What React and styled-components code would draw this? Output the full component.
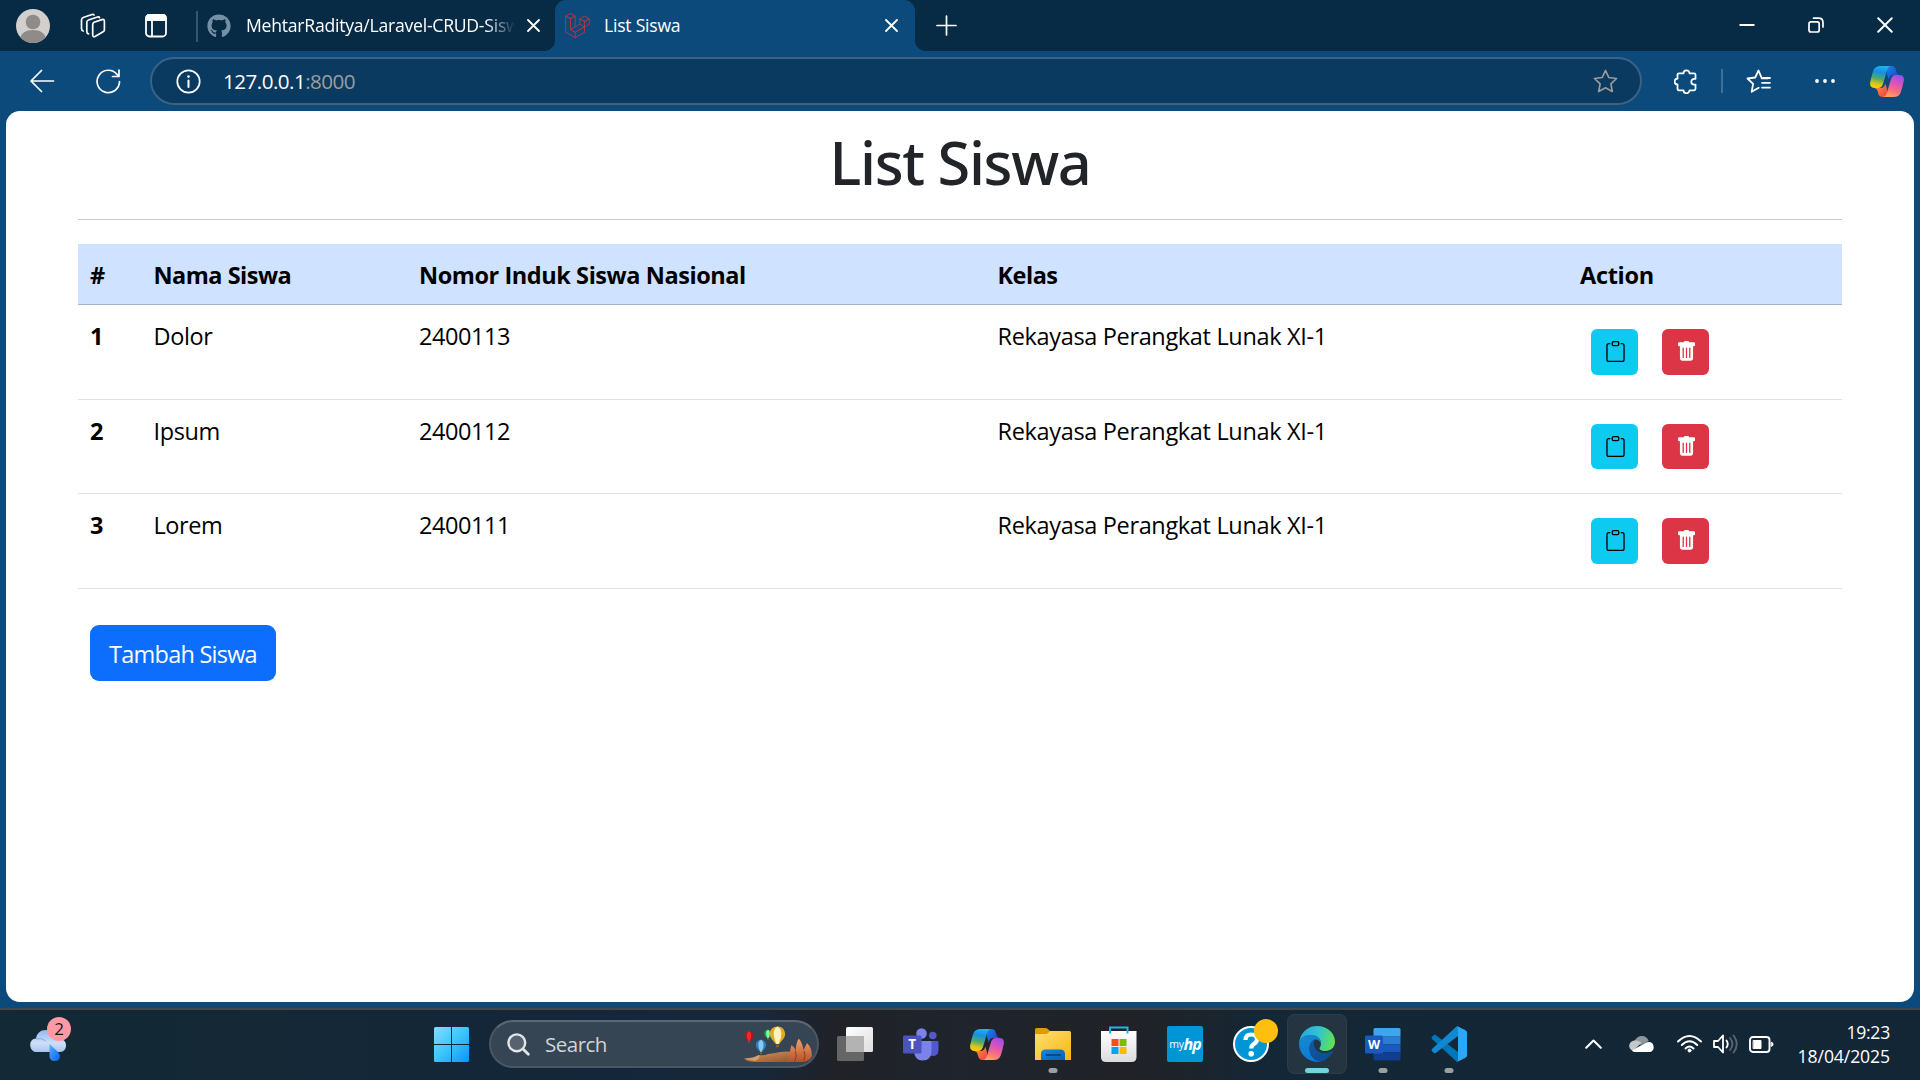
import React from "react";
import styled, { createGlobalStyle } from "styled-components";
import { BsClipboard, BsTrashFill } from "react-icons/bs";
import { SiLaravel } from "react-icons/si";
import { FaGithub } from "react-icons/fa";

const GlobalStyle = createGlobalStyle`
  *, *::before, *::after { box-sizing: border-box; }
  html, body { margin: 0; padding: 0; }
  body {
    width: 1920px;
    height: 1080px;
    overflow: hidden;
    font-family: "Open Sans", "Noto Sans", sans-serif;
    background: #0b4a7a;
  }
  svg { display: block; flex: none; }
`;

const Screen = styled.div`
  width: 1920px;
  height: 1080px;
  display: flex;
  flex-direction: column;
  background: #0b4a7a;
`;

/* ---------- Tab strip ---------- */

const TabStrip = styled.header`
  height: 51px;
  display: flex;
  align-items: stretch;
  background: #072a45;
  color: #fff;
  padding-left: 16px;
`;

const StripTools = styled.div`
  display: flex;
  align-items: center;
  width: 180px;
`;

const Avatar = styled.div`
  width: 34px;
  height: 34px;
  border-radius: 50%;
  overflow: hidden;
  margin-right: 30px;
`;

const ToolGap = styled.span`
  width: ${(p) => p.$w}px;
  flex: none;
`;

const StripDivider = styled.span`
  width: 2px;
  height: 31px;
  margin-top: 1px;
  align-self: center;
  background: #3a5469;
`;

const Tab = styled.div`
  position: relative;
  display: flex;
  align-items: center;
  width: ${(p) => p.$width}px;
  padding-left: 9px;
  border-radius: 11px 11px 0 0;
  background: ${(p) => (p.$active ? "#0b4a7a" : "transparent")};
  font-size: 17.6px;
  line-height: 26px;

  ${(p) =>
    p.$active &&
    `
    &::before, &::after {
      content: "";
      position: absolute;
      bottom: 0;
      width: 10px;
      height: 10px;
    }
    &::before {
      left: -10px;
      background: radial-gradient(circle at 0 0, transparent 9.5px, #0b4a7a 10px);
    }
    &::after {
      right: -10px;
      background: radial-gradient(circle at 100% 0, transparent 9.5px, #0b4a7a 10px);
    }
  `}
`;

const TabTitle = styled.span`
  flex: none;
  width: 269px;
  margin-left: ${(p) => p.$gap}px;
  padding-bottom: 1px;
  white-space: nowrap;
  letter-spacing: -0.24px;
  ${(p) => p.$fade && "mask-image: linear-gradient(90deg, #000 240px, transparent 269px);"}
`;

const NewTab = styled.div`
  display: flex;
  align-items: center;
  padding: 0 0 1px 21px;
`;

const WindowControls = styled.div`
  display: flex;
  align-items: center;
  gap: 53px;
  margin-left: auto;
  padding: 0 27px 1px 0;
`;

/* ---------- Address bar ---------- */

const Toolbar = styled.div`
  height: 60px;
  display: flex;
  align-items: center;
  padding-left: 29px;
  background: #0b4a7a;
`;

const NavButtons = styled.div`
  display: flex;
  gap: 41px;
  width: 121px;
`;

const AddressField = styled.div`
  width: 1492px;
  height: 48px;
  display: flex;
  align-items: center;
  padding: 0 22px 0 24px;
  border: 2px solid #3a6285;
  border-radius: 24px;
  background: #0a3a60;
`;

const Url = styled.span`
  flex: 1;
  margin-left: 22px;
  font-size: 20.6px;
  line-height: 30px;
  letter-spacing: -0.52px;
  color: #fff;
`;

const Port = styled.span`
  color: #9d9d9d;
`;

const ToolbarActions = styled.div`
  display: flex;
  align-items: center;
  margin-left: 32px;
`;

const ActionDivider = styled.span`
  width: 2px;
  height: 24px;
  margin: 0 23px 0 23px;
  background: #3f6f96;
`;

/* ---------- Page ---------- */

const Viewport = styled.div`
  height: 897px;
  padding: 0 6px 6px;
  background: #0b4a7a;
`;

const Page = styled.main`
  height: 891px;
  border-radius: 14px;
  background: #fff;
  padding: 0 72px;
`;

const Title = styled.h1`
  margin: 0;
  padding-top: 15px;
  height: 108px;
  text-align: center;
  font-family: "Noto Sans", sans-serif;
  font-weight: 500;
  font-size: 59.5px;
  line-height: 72px;
  letter-spacing: -1.4px;
  color: #212529;
`;

const Rule = styled.hr`
  margin: 0 0 24px;
  border: 0;
  height: 1px;
  background: #c8c9ca;
`;

const Table = styled.div`
  display: flex;
  flex-direction: column;
  font-size: 23.5px;
  line-height: 36px;
  color: #000;
`;

const TableRow = styled.div`
  display: grid;
  grid-template-columns: 63.5px 265.5px 578.5px 582.5px 1fr;
  height: ${(p) => (p.$head ? 61 : 94.5)}px;
  background: ${(p) => (p.$head ? "#cfe2ff" : "#fff")};
  border-bottom: 1px solid ${(p) => (p.$head ? "#a6b5cc" : "#dee2e6")};
  font-weight: ${(p) => (p.$head ? 700 : 400)};
`;

const Cell = styled.div`
  padding: 13px 0 0 12px;
  white-space: nowrap;
  letter-spacing: ${(p) => p.$spacing ?? 0}px;
  font-weight: ${(p) => (p.$bold ? 700 : "inherit")};
`;

const Actions = styled.div`
  display: flex;
  gap: 24px;
  padding: 24px 0 0 23px;
`;

const IconButton = styled.button`
  display: flex;
  align-items: center;
  justify-content: center;
  width: 47px;
  height: 45.5px;
  padding: 0 0 0 1px;
  border: 0;
  border-radius: 6px;
  font-size: 21px;
  color: ${(p) => (p.$danger ? "#fff" : "#000")};
  background: ${(p) => (p.$danger ? "#dc3545" : "#0dcaf0")};
`;

const AddButton = styled.button`
  display: block;
  margin: 36px 0 0 12px;
  width: 186px;
  height: 56px;
  padding: 3px 0 0;
  border: 0;
  border-radius: 9px;
  background: #0d6efd;
  color: #fff;
  font-family: inherit;
  font-size: 23.5px;
  line-height: 36px;
  letter-spacing: -0.76px;
`;

/* ---------- Taskbar ---------- */

const Taskbar = styled.footer`
  height: 72px;
  display: flex;
  align-items: center;
  padding-bottom: 2px;
  border-top: 2px solid #41484d;
  background: linear-gradient(
    90deg,
    #132935 0,
    #142836 260px,
    #14273a 600px,
    #17273a 760px,
    #202227 835px,
    #1f242d 960px,
    #202227 1130px,
    #1d242b 1190px,
    #142736 1260px,
    #132636 1920px
  );
`;

const Weather = styled.div`
  position: relative;
  width: 404px;
  padding: 2px 0 0 30px;
`;

const Badge = styled.span`
  position: absolute;
  left: 47px;
  top: -10px;
  width: 24px;
  height: 24px;
  border-radius: 50%;
  background: #ff99a4;
  color: #1b1b1b;
  font-size: 17px;
  line-height: 23px;
  text-align: center;
`;

const StartButton = styled.div`
  width: 85px;
  padding-left: 30px;
`;

const SearchBox = styled.div`
  display: flex;
  align-items: center;
  width: 330px;
  height: 48px;
  padding: 0 3px 0 16px;
  border: 2px solid #4a5763;
  border-top-color: #5d6873;
  border-radius: 24px;
  background: #364553;
`;

const SearchLabel = styled.span`
  flex: 1;
  padding-left: 15px;
  font-size: 20.5px;
  line-height: 30px;
  letter-spacing: -0.5px;
  color: #cfd4d8;
`;

const Apps = styled.div`
  display: flex;
  margin-left: 3px;
`;

const AppSlot = styled.div`
  position: relative;
  display: flex;
  align-items: center;
  justify-content: center;
  width: 60px;
  height: 60px;
  margin: 0 3px;
  border-radius: 8px;
  ${(p) => p.$active && "background: #243441; box-shadow: inset 0 0 0 1px #2d3c48;"}
`;

const RunningMark = styled.span`
  position: absolute;
  bottom: 1px;
  left: 50%;
  transform: translateX(-50%);
  width: ${(p) => (p.$active ? 24 : 9)}px;
  height: 5px;
  border-radius: 3px;
  background: ${(p) => (p.$active ? "#76d3da" : "#9a9fa3")};
`;

const HpTile = styled.div`
  display: flex;
  align-items: center;
  justify-content: center;
  width: 36px;
  height: 36px;
  border-radius: 2px;
  background: #0096d6;
  color: #fff;
  font-size: 10.5px;
  line-height: 36px;
  letter-spacing: -0.4px;
`;

const HpMark = styled.b`
  font-size: 16px;
  font-style: italic;
  letter-spacing: -1px;
`;

const NotifyDot = styled.span`
  position: absolute;
  right: 3px;
  top: 5px;
  width: 24px;
  height: 24px;
  border-radius: 50%;
  background: #ffbf0f;
`;

const Tray = styled.div`
  display: flex;
  align-items: center;
  margin-left: auto;
  padding-right: 30px;
`;

const Clock = styled.div`
  width: 116px;
  display: flex;
  flex-direction: column;
  align-items: flex-end;
  color: #fff;
  font-size: 17.6px;
  line-height: 24px;
`;

const ClockLine = styled.span`
  letter-spacing: ${(p) => p.$spacing}px;
`;

/* ---------- Drawings ---------- */

const stroke = { fill: "none", stroke: "#fff", strokeWidth: 1.7, strokeLinecap: "round", strokeLinejoin: "round" };

const AvatarIcon = () => (
  <svg width="34" height="34" viewBox="0 0 34 34">
    <rect width="34" height="34" fill="#d2d0ce" />
    <circle cx="17" cy="13" r="7.3" fill="#8f8b88" />
    <path d="M4 30c1-6 6-9 13-9s12 3 13 9l-4 4H8z" fill="#8f8b88" />
  </svg>
);

const WorkspacesIcon = () => (
  <svg width="26" height="26" viewBox="0 0 26 26" {...stroke}>
    <path d="M14 9.300 22 6.600q2.400-.6 2.400 1.400v8.800q0 1.400-1.300 1.900L15 23.600q-2.300.7-2.300-1.500v-10q0-2.200 1.300-2.800z" />
    <path d="M8.600 20.800Q6.800 20.500 6.800 18.500V9.500Q6.800 7.500 8.500 7L17.500 4q1.600-.4 2 .6" />
    <path d="M3.200 18Q1.500 17.500 1.500 15.500V7Q1.500 5 3.200 4.500L12 1.500q1.600-.4 2 .5" />
  </svg>
);

const TabActionsIcon = () => (
  <svg width="22" height="24" viewBox="0 0 22 24" {...stroke} strokeWidth="1.8">
    <rect x="1" y="1" width="20" height="21.500" rx="3.500" />
    <path d="M1 4.500Q1 1 4.500 1h13Q21 1 21 4.500V6H1z" fill="#fff" />
    <path d="M7 7v15" />
  </svg>
);

const CrossIcon = ({ size = 13, width = 1.8 }) => (
  <svg width={size} height={size} viewBox="0 0 13 13" {...stroke} strokeWidth={width}>
    <path d="M1 1l11 11M12 1 1 12" />
  </svg>
);

const PlusIcon = () => (
  <svg width="21" height="21" viewBox="0 0 21 21" {...stroke}>
    <path d="M10.500 1v19M1 10.500h19" />
  </svg>
);

const MinimizeIcon = () => (
  <svg width="16" height="16" viewBox="0 0 16 16">
    <path d="M0.500 8h15" stroke="#fff" strokeWidth="2" />
  </svg>
);

const RestoreIcon = () => (
  <svg width="16" height="16" viewBox="0 0 16 16" {...stroke} strokeWidth="1.7">
    <rect x="1" y="4.800" width="10.200" height="10.200" rx="2" />
    <path d="M5.500 1.200h5Q15 1.200 15 5.500v4.500" />
  </svg>
);

const BackIcon = () => (
  <svg width="26" height="24" viewBox="0 0 26 24" {...stroke}>
    <path d="M12.500 1.500 2 12l10.500 10.500M2 12h22.500" />
  </svg>
);

const ReloadIcon = () => (
  <svg width="25" height="25" viewBox="0 0 25 25" {...stroke}>
    <path d="M23.500 12.500A11.200 11.200 0 1 1 21 5.400L23 7.500M23 1v6.500h-6.500" />
  </svg>
);

const InfoIcon = () => (
  <svg width="25" height="25" viewBox="0 0 25 25" {...stroke}>
    <circle cx="12.500" cy="12.500" r="11.200" />
    <path d="M12.500 11.500v6.500" strokeWidth="2" />
    <circle cx="12.500" cy="7.600" r=".7" fill="#fff" strokeWidth="1.200" />
  </svg>
);

const StarIcon = () => (
  <svg width="25" height="25" viewBox="0 0 25 25" {...stroke} stroke="#9b9b9b">
    <path d="M12.500 1.500l3.300 7 7.700 1-5.600 5.300 1.400 7.700-6.800-3.700-6.800 3.700 1.400-7.700L1.500 9.500l7.700-1z" />
  </svg>
);

const PuzzleIcon = () => (
  <svg width="24" height="25" viewBox="0 0 24 25" {...stroke} strokeWidth="1.800">
    <path d="M5 4.300h4.500a3 3 0 0 1 6 0H20q1.500 0 1.500 1.500v4h-1.300a2.900 2.900 0 0 0 0 5.800h1.300v4.200q0 1.500-1.500 1.500h-4.500a3 3 0 0 1-6 0H5q-1.500 0-1.500-1.500v-4.300a2.900 2.900 0 0 1 0-5.800V5.800Q3.500 4.300 5 4.300z" />
  </svg>
);

const FavoritesIcon = () => (
  <svg width="25" height="25" viewBox="0 0 25 25" {...stroke} strokeWidth="1.800">
    <path d="M22 9.300h-6.200L12.500 1.500 9.200 8.500 1.500 9.500l5.600 5.300-1.400 8 7-4" />
    <path d="M17 9h7M16 13.800h8M16 18.600h8" />
  </svg>
);

const DotsIcon = () => (
  <svg width="20" height="6" viewBox="0 0 20 6" fill="#fff">
    <circle cx="2" cy="3" r="1.900" />
    <circle cx="10" cy="3" r="1.900" />
    <circle cx="18" cy="3" r="1.900" />
  </svg>
);

const CopilotIcon = ({ id }) => (
  <svg width="34" height="31" viewBox="0 0 34 31">
    <defs>
      <linearGradient id={`${id}-left`} x1=".6" y1="0" x2=".4" y2="1">
        <stop offset="0" stopColor="#21b4ef" />
        <stop offset=".3" stopColor="#168ee0" />
        <stop offset=".6" stopColor="#55ab66" />
        <stop offset=".85" stopColor="#dcc817" />
        <stop offset="1" stopColor="#ffc800" />
      </linearGradient>
      <linearGradient id={`${id}-right`} x1=".7" y1="0" x2=".35" y2="1">
        <stop offset="0" stopColor="#a04bea" />
        <stop offset=".4" stopColor="#dc55b5" />
        <stop offset=".7" stopColor="#f8707c" />
        <stop offset="1" stopColor="#ffa45c" />
      </linearGradient>
      <linearGradient id={`${id}-top`} x1="0" y1="0" x2="1" y2="1">
        <stop offset="0" stopColor="#1a82e8" />
        <stop offset="1" stopColor="#1740c4" />
      </linearGradient>
      <linearGradient id={`${id}-base`} x1="0" y1="0" x2="1" y2="1">
        <stop offset="0" stopColor="#ffa026" />
        <stop offset="1" stopColor="#ee3c4e" />
      </linearGradient>
    </defs>
    <path d="M17 0h4.500q3.200 0 4.100 3l.9 3.200q.7 2.300 3 2.800h-6.500q-3 .2-4 3.500L18.700 13.500 17 8z" fill={`url(#${id}-top)`} />
    <path d="M17 31h-4.500q-3.200 0-4.100-3l-.9-3.200Q6.800 22.500 4.500 22H11q3-.2 4-3.500l.3-1L17 23z" fill={`url(#${id}-base)`} />
    <path d="M10.500 0H21q-2.800.4-3.700 3.600L13.300 17q-1.300 5-5 5H4.800Q-1 22 .3 15.800q1-5.300 3-11.300Q5 0 10.500 0z" fill={`url(#${id}-left)`} />
    <path d="M23.500 31H13q2.800-.4 3.700-3.600L20.700 14q1.300-5 5-5h3.500q5.800 0 4.500 6.200-1 5.300-3 11.300Q29 31 23.500 31z" fill={`url(#${id}-right)`} />
  </svg>
);

const WeatherIcon = () => (
  <svg width="37" height="33" viewBox="0 0 37 33">
    <defs>
      <linearGradient id="cloud" x1="0" y1="0" x2="0" y2="1">
        <stop offset="0" stopColor="#92b6f3" />
        <stop offset=".6" stopColor="#cfdff8" />
        <stop offset="1" stopColor="#a9c3f0" />
      </linearGradient>
      <linearGradient id="drop" x1="0" y1="0" x2="1" y2="1">
        <stop offset="0" stopColor="#5ab0ff" />
        <stop offset="1" stopColor="#0463ee" />
      </linearGradient>
    </defs>
    <path d="M6 9.500C7 4 10.500 1 15.500 1c6 0 9.500 4 10 9h4.500c8 0 8 13 0 13H6.500C-1.500 23-2 9.500 6 9.500z" fill="url(#cloud)" />
    <path d="M6 9.800q5.500-1.300 9.500 2" fill="none" stroke="#86a9e8" />
    <path d="M19.500 15l8 7.500q2.800 3 2.300 6-.5 3.500-5.200 3.500-5.100 0-5.100-5z" fill="url(#drop)" />
  </svg>
);

const WindowsIcon = () => (
  <svg width="35" height="35" viewBox="0 0 35 35">
    <defs>
      <linearGradient id="win" gradientUnits="userSpaceOnUse" x1="0" y1="0" x2="35" y2="35">
        <stop offset="0" stopColor="#84dcff" />
        <stop offset=".5" stopColor="#3cc5fb" />
        <stop offset="1" stopColor="#0a94f8" />
      </linearGradient>
    </defs>
    <path d="M1.500 0H17v17H0V1.500Q0 0 1.500 0zM18 0h15.500Q35 0 35 1.500V17H18zM0 18h17v17H1.500Q0 35 0 33.500zM18 18h17v15.500q0 1.500-1.500 1.500H18z" fill="url(#win)" />
  </svg>
);

const SearchIcon = () => (
  <svg width="23" height="23" viewBox="0 0 23 23" fill="none" stroke="#e3e6e9" strokeWidth="2.400" strokeLinecap="round">
    <circle cx="9.800" cy="9.800" r="8.400" fill="#56626d" />
    <path d="M16 16l5.300 5.300" strokeWidth="2.800" />
  </svg>
);

const Balloon = ({ x, y, r, dark, light }) => (
  <g transform={`translate(${x} ${y}) scale(${r})`}>
    <path d="M0-1C.6-1 1-.6 1 0 1 .6.5.9.250 1.300h-.5C-.5.9-1 .6-1 0c0-.6.4-1 1-1z" fill={dark} />
    <path d="M0-1c.4.200.5.600.5 1 0 .6-.25.900-.35 1.300h-.3C-.25.9-.5.600-.5 0c0-.4.100-.8.500-1z" fill={light} />
    <path d="M-.2 1.400h.4v.350h-.4z" fill="#8a5a22" />
  </g>
);

const BalloonsArt = () => (
  <svg width="70" height="38" viewBox="0 0 70 38">
    <defs>
      <linearGradient id="rock" x1="0" y1="0" x2="0" y2="1">
        <stop offset="0" stopColor="#f3a368" />
        <stop offset="1" stopColor="#b6502a" />
      </linearGradient>
      <linearGradient id="sand" x1="0" y1="0" x2="1" y2="1">
        <stop offset="0" stopColor="#d79a63" />
        <stop offset="1" stopColor="#8d4f2b" />
      </linearGradient>
    </defs>
    <Balloon x={5} y={10.500} r={4.200} dark="#c40d14" light="#ee2a2a" />
    <Balloon x={24} y={8.500} r={3.700} dark="#13a84c" light="#8bf0a4" />
    <Balloon x={17} y={20} r={5.200} dark="#2b7fc0" light="#8cc8ee" />
    <Balloon x={33.500} y={9} r={7.600} dark="#e0a92c" light="#fff2ba" />
    <path d="M0 33.500q9-.5 15-3.500 5 1 9-1 8-1 12-2 8-1 12 0l6 10H13Q3 37 0 33.500z" fill="url(#sand)" />
    <path d="M1 33.500q8 .500 14-3.500 2 3-4 6z" fill="#e5b283" opacity=".7" />
    <path d="M42 37q3-4 3.500-9l2-8q3 2 4 6 .500-8 3.300-12.500Q58.500 18 59.500 25l3.500-7q5 5 5 13-2 5-9 6z" fill="url(#rock)" />
    <path d="M50.500 37q3-6 1-11M59.500 36q3-5 .500-10" fill="none" stroke="#93391d" />
  </svg>
);

const TaskViewIcon = () => (
  <svg width="36" height="34" viewBox="0 0 36 34">
    <defs>
      <linearGradient id="pane" x1="0" y1="0" x2="1" y2="1">
        <stop offset="0" stopColor="#fff" />
        <stop offset="1" stopColor="#dedede" />
      </linearGradient>
    </defs>
    <rect x="9" y="0" width="27" height="25" rx="1.500" fill="url(#pane)" />
    <rect x="0" y="9" width="27" height="25" rx="1.500" fill="#777" opacity=".8" />
    <path d="M9 9h18v16H9z" fill="#b3b3b3" />
  </svg>
);

const TeamsIcon = () => (
  <svg width="36" height="33" viewBox="0 0 36 33">
    <circle cx="29.800" cy="7.500" r="3.800" fill="#5059c9" />
    <path d="M25 13h9.500q1 0 1 1v8q0 6-6 6-4.500 0-4.500-5z" fill="#5059c9" />
    <circle cx="18.500" cy="5.500" r="5.300" fill="#7b83eb" />
    <path d="M11 13h16.500q1 0 1 1v9q0 9.500-9 9.500-8 0-8.500-9z" fill="#7b83eb" />
    <rect x="0" y="7.500" width="18.500" height="18" rx="1.500" fill="#4b53bc" />
    <text x="9.200" y="21.300" fill="#fff" fontSize="13.500" fontWeight="700" textAnchor="middle" fontFamily="Open Sans, sans-serif">T</text>
  </svg>
);

const ExplorerIcon = () => (
  <svg width="36" height="34" viewBox="0 0 36 34">
    <defs>
      <linearGradient id="folder" x1="0" y1="0" x2="1" y2="1">
        <stop offset="0" stopColor="#ffdf72" />
        <stop offset="1" stopColor="#f8b611" />
      </linearGradient>
      <linearGradient id="tray" x1="0" y1="0" x2="1" y2="1">
        <stop offset="0" stopColor="#1488dc" />
        <stop offset="1" stopColor="#0860b2" />
      </linearGradient>
    </defs>
    <path d="M0 2.500Q0 1 1.500 1h9q1.200 0 2 .800L15 4v6H0z" fill="#dd9b04" />
    <path d="M0 7h11q1 0 2-.800L15 4h19.500Q36 4 36 5.500V33H0z" fill="url(#folder)" />
    <path d="M6 33v-6q0-4.500 4.500-4.500h15q4.500 0 4.500 4.500v6z" fill="url(#tray)" />
    <path d="M11 28h14" stroke="#064a8c" strokeWidth="1.800" strokeLinecap="round" />
  </svg>
);

const StoreIcon = () => (
  <svg width="36" height="36" viewBox="0 0 36 36">
    <defs>
      <linearGradient id="bag" x1="0" y1="0" x2="0" y2="1">
        <stop offset="0" stopColor="#fff" />
        <stop offset="1" stopColor="#dcdcdc" />
      </linearGradient>
    </defs>
    <path d="M0 5h35.500v26q0 5-5 5H5q-5 0-5-5z" fill="url(#bag)" />
    <path d="M9 7.500V1.500h17.500v6" fill="none" stroke="#23b2e8" strokeWidth="2" />
    <path d="M10.500 13h7v7h-7z" fill="#f25022" />
    <path d="M18.500 13h7v7h-7z" fill="#7fba00" />
    <path d="M10.500 21h7v7h-7z" fill="#00a4ef" />
    <path d="M18.500 21h7v7h-7z" fill="#ffb900" />
  </svg>
);

const HelpIcon = () => (
  <svg width="36" height="36" viewBox="0 0 36 36">
    <circle cx="18" cy="18" r="17" fill="#0096d6" stroke="#fff" strokeWidth="2" />
    <path d="M12.500 14q0-5.500 5.800-5.500 5.700 0 5.700 4.700 0 2.800-3.200 4.800-2.500 1.500-2.500 4.500" fill="none" stroke="#fff" strokeWidth="4.200" />
    <circle cx="18.200" cy="27.800" r="2.800" fill="#fff" />
  </svg>
);

const EdgeIcon = () => (
  <svg width="36" height="36" viewBox="0 0 36 36">
    <defs>
      <linearGradient id="edge-top" x1="0" y1=".3" x2="1" y2=".5">
        <stop offset="0" stopColor="#2ba5dd" />
        <stop offset=".5" stopColor="#2fc3d4" />
        <stop offset="1" stopColor="#63e14f" />
      </linearGradient>
      <linearGradient id="edge-mid" x1=".2" y1="0" x2=".5" y2="1">
        <stop offset="0" stopColor="#1689cf" />
        <stop offset="1" stopColor="#0a7ad4" />
      </linearGradient>
      <linearGradient id="edge-low" x1="0" y1="0" x2="1" y2="1">
        <stop offset="0" stopColor="#0f59a6" />
        <stop offset="1" stopColor="#0c4a92" />
      </linearGradient>
    </defs>
    <path d="M0 17.500C.8 7.500 8 0 18 0c10.500 0 18 7.500 18 15.500 0 6-4.500 9.500-9.500 9.500-4.500 0-6-1.500-6-2.700 0-1 1.500-1.800 1.500-4.800C22 12.500 17.500 9 11.500 9 5 9 1 13.500 0 17.500z" fill="url(#edge-top)" />
    <path d="M0 17.500C1 12 5.500 8.800 11.500 8.800 17.500 8.800 22 12 22 17.500c-1.500-3.500-4-4.500-6-4-4 1.500-6 6-5.500 10.500.500 5.500 4.500 10.500 12 11.500C12 38 0 30 0 17.500z" fill="url(#edge-mid)" />
    <path d="M10.500 23c-.2-4.500 2-8.500 5.500-9.600-2 3-1.500 7.600 1.500 10.600 4 4 10 4 15.500.800 1-.5 1.600.300 1 1.200-4 6-8.500 9-12.500 9.600-6.500-.1-10.800-6.600-11-12.600z" fill="url(#edge-low)" />
  </svg>
);

const WordIcon = () => (
  <svg width="36" height="33" viewBox="0 0 36 33">
    <path d="M8.500 1.500Q8.500 0 10 0h24q1.500 0 1.500 1.500V8.500h-27z" fill="#41a5ee" />
    <path d="M8.500 8.200h27v8.200h-27z" fill="#2b7cd3" />
    <path d="M8.500 16.400h27v8h-27z" fill="#185abd" />
    <path d="M8.500 24.400h27v6.600q0 1.500-1.500 1.500H10q-1.500 0-1.500-1.500z" fill="#103f91" />
    <rect x="0" y="7.500" width="18" height="18" rx="1.500" fill="#185abd" />
    <text x="9" y="21" fill="#fff" fontSize="12.500" fontWeight="700" textAnchor="middle" fontFamily="Open Sans, sans-serif">W</text>
  </svg>
);

const CodeIcon = () => (
  <svg width="36" height="36" viewBox="0 0 36 36">
    <path d="M1 10.800 2.700 9.200q1-.8 2-.1L27 26v9.800q-1.200-.1-2-.9L1 13Q0 11.900 1 10.800z" fill="#0076ba" />
    <path d="M1 25.200l1.700 1.600q1 .8 2 .1L27 10V.200q-1.200.100-2 .9L1 23q-1 1.100 0 2.200z" fill="#1287d2" />
    <path d="M25 .900q.8-.8 2-.3l7.500 3.600q1.500.7 1.500 2.300v23q0 1.600-1.500 2.300L27 35.400q-1.200.5-2-.3 2 1 2-1.100V2Q27 0 25 .900z" fill="#2aa7f5" />
  </svg>
);

const ChevronUpIcon = () => (
  <svg width="17" height="10" viewBox="0 0 17 10" {...stroke} strokeWidth="2">
    <path d="M1.200 8.800l7.300-7.300 7.300 7.300" />
  </svg>
);

const OneDriveIcon = () => (
  <svg width="25" height="16" viewBox="0 0 25 16">
    <path d="M5.500 5C7 1.500 10 0 12.800 0c3.500 0 6 2 6.900 5l-8 4z" fill="#8e979e" />
    <path d="M5.500 4.500c3 0 4.500.5 7 2.300L4 15C-1 13.500-1.500 5.500 5.500 4.500z" fill="#c3c8cb" />
    <path d="M3 14.500 14.500 8q2.500-2 5.500-2c6 0 6.500 10 0 10H6q-2 0-3-1.500z" fill="#fff" />
  </svg>
);

const WifiIcon = () => (
  <svg width="25" height="18" viewBox="0 0 25 18" {...stroke} strokeWidth="1.900">
    <path d="M1 6.500q11.500-11 23 0M4.800 10q7.700-7.500 15.400 0M8.500 13.500q4-4 8 0" />
    <circle cx="12.500" cy="15.500" r="1.500" fill="#fff" strokeWidth="1" />
  </svg>
);

const VolumeIcon = () => (
  <svg width="25" height="20" viewBox="0 0 25 20" {...stroke} strokeWidth="1.800">
    <path d="M1 7h4l5-5.500v17L5 13H1z" />
    <path d="M13.500 6.500q2.500 3.500 0 7" />
    <path d="M17 4q5 6 0 12M20.500 1.500q6.500 8.500 0 17" stroke="#5a6772" />
  </svg>
);

const BatteryIcon = () => (
  <svg width="25" height="17" viewBox="0 0 25 17" {...stroke} strokeWidth="1.900">
    <rect x="1" y="1" width="19.500" height="15" rx="3" />
    <path d="M22.500 6.300q1.500 0 1.500 2t-1.500 2z" fill="#fff" strokeWidth="1" />
    <path d="M4.500 4.500h7.500v8H4.500z" fill="#fff" strokeWidth="1" />
  </svg>
);

/* ---------- Data ---------- */

const headings = [
  { label: "#", spacing: 0 },
  { label: "Nama Siswa", spacing: -0.5 },
  { label: "Nomor Induk Siswa Nasional", spacing: -0.43 },
  { label: "Kelas", spacing: -0.5 },
  { label: "Action", spacing: -0.3 },
];

const students = [
  { name: "Dolor", nisn: "2400113" },
  { name: "Ipsum", nisn: "2400112" },
  { name: "Lorem", nisn: "2400111" },
];

const apps = [
  { key: "taskview", icon: <TaskViewIcon /> },
  { key: "teams", icon: <TeamsIcon /> },
  { key: "copilot", icon: <CopilotIcon id="bar" /> },
  { key: "explorer", icon: <ExplorerIcon />, running: true },
  { key: "store", icon: <StoreIcon /> },
  { key: "myhp", icon: <HpTile>my<HpMark>hp</HpMark></HpTile> },
  { key: "help", icon: <HelpIcon />, notify: true },
  { key: "edge", icon: <EdgeIcon />, running: true, active: true },
  { key: "word", icon: <WordIcon />, running: true },
  { key: "code", icon: <CodeIcon />, running: true },
];

export default function App() {
  return (
    <Screen>
      <GlobalStyle />
      <TabStrip>
        <StripTools>
          <Avatar><AvatarIcon /></Avatar>
          <WorkspacesIcon />
          <ToolGap $w={39} />
          <TabActionsIcon />
        </StripTools>
        <StripDivider />
        <Tab $width={357}>
          <FaGithub size={24} color="#7590a6" />
          <TabTitle $gap={15} $fade>MehtarRaditya/Laravel-CRUD-Sisw</TabTitle>
          <ToolGap $w={12} />
          <CrossIcon />
        </Tab>
        <Tab $active $width={360}>
          <ToolGap $w={1} />
          <SiLaravel size={25} color="#d5303a" />
          <TabTitle $gap={14}>List Siswa</TabTitle>
          <ToolGap $w={12} />
          <CrossIcon />
        </Tab>
        <NewTab><PlusIcon /></NewTab>
        <WindowControls>
          <MinimizeIcon />
          <RestoreIcon />
          <CrossIcon size={16} width={1.6} />
        </WindowControls>
      </TabStrip>

      <Toolbar>
        <NavButtons>
          <BackIcon />
          <ReloadIcon />
        </NavButtons>
        <AddressField>
          <InfoIcon />
          <Url>127.0.0.1<Port>:8000</Port></Url>
          <StarIcon />
        </AddressField>
        <ToolbarActions>
          <PuzzleIcon />
          <ActionDivider />
          <FavoritesIcon />
          <ToolGap $w={44} />
          <DotsIcon />
          <ToolGap $w={35} />
          <CopilotIcon id="side" />
        </ToolbarActions>
      </Toolbar>

      <Viewport>
        <Page>
          <Title>List Siswa</Title>
          <Rule />
          <Table>
            <TableRow $head>
              {headings.map((h) => (
                <Cell key={h.label} $spacing={h.spacing}>{h.label}</Cell>
              ))}
            </TableRow>
            {students.map((s, i) => (
              <TableRow key={s.nisn}>
                <Cell $bold>{i + 1}</Cell>
                <Cell $spacing={-0.4}>{s.name}</Cell>
                <Cell $spacing={-0.45}>{s.nisn}</Cell>
                <Cell $spacing={-0.34}>Rekayasa Perangkat Lunak XI-1</Cell>
                <Actions>
                  <IconButton><BsClipboard /></IconButton>
                  <IconButton $danger><BsTrashFill /></IconButton>
                </Actions>
              </TableRow>
            ))}
          </Table>
          <AddButton>Tambah Siswa</AddButton>
        </Page>
      </Viewport>

      <Taskbar>
        <Weather>
          <WeatherIcon />
          <Badge>2</Badge>
        </Weather>
        <StartButton><WindowsIcon /></StartButton>
        <SearchBox>
          <SearchIcon />
          <SearchLabel>Search</SearchLabel>
          <BalloonsArt />
        </SearchBox>
        <Apps>
          {apps.map((a) => (
            <AppSlot key={a.key} $active={a.active}>
              {a.icon}
              {a.notify && <NotifyDot />}
              {a.running && <RunningMark $active={a.active} />}
            </AppSlot>
          ))}
        </Apps>
        <Tray>
          <ChevronUpIcon />
          <ToolGap $w={27} />
          <OneDriveIcon />
          <ToolGap $w={23} />
          <WifiIcon />
          <ToolGap $w={11} />
          <VolumeIcon />
          <ToolGap $w={11} />
          <BatteryIcon />
          <Clock>
            <ClockLine $spacing={-0.25}>19:23</ClockLine>
            <ClockLine $spacing={-0.1}>18/04/2025</ClockLine>
          </Clock>
        </Tray>
      </Taskbar>
    </Screen>
  );
}
